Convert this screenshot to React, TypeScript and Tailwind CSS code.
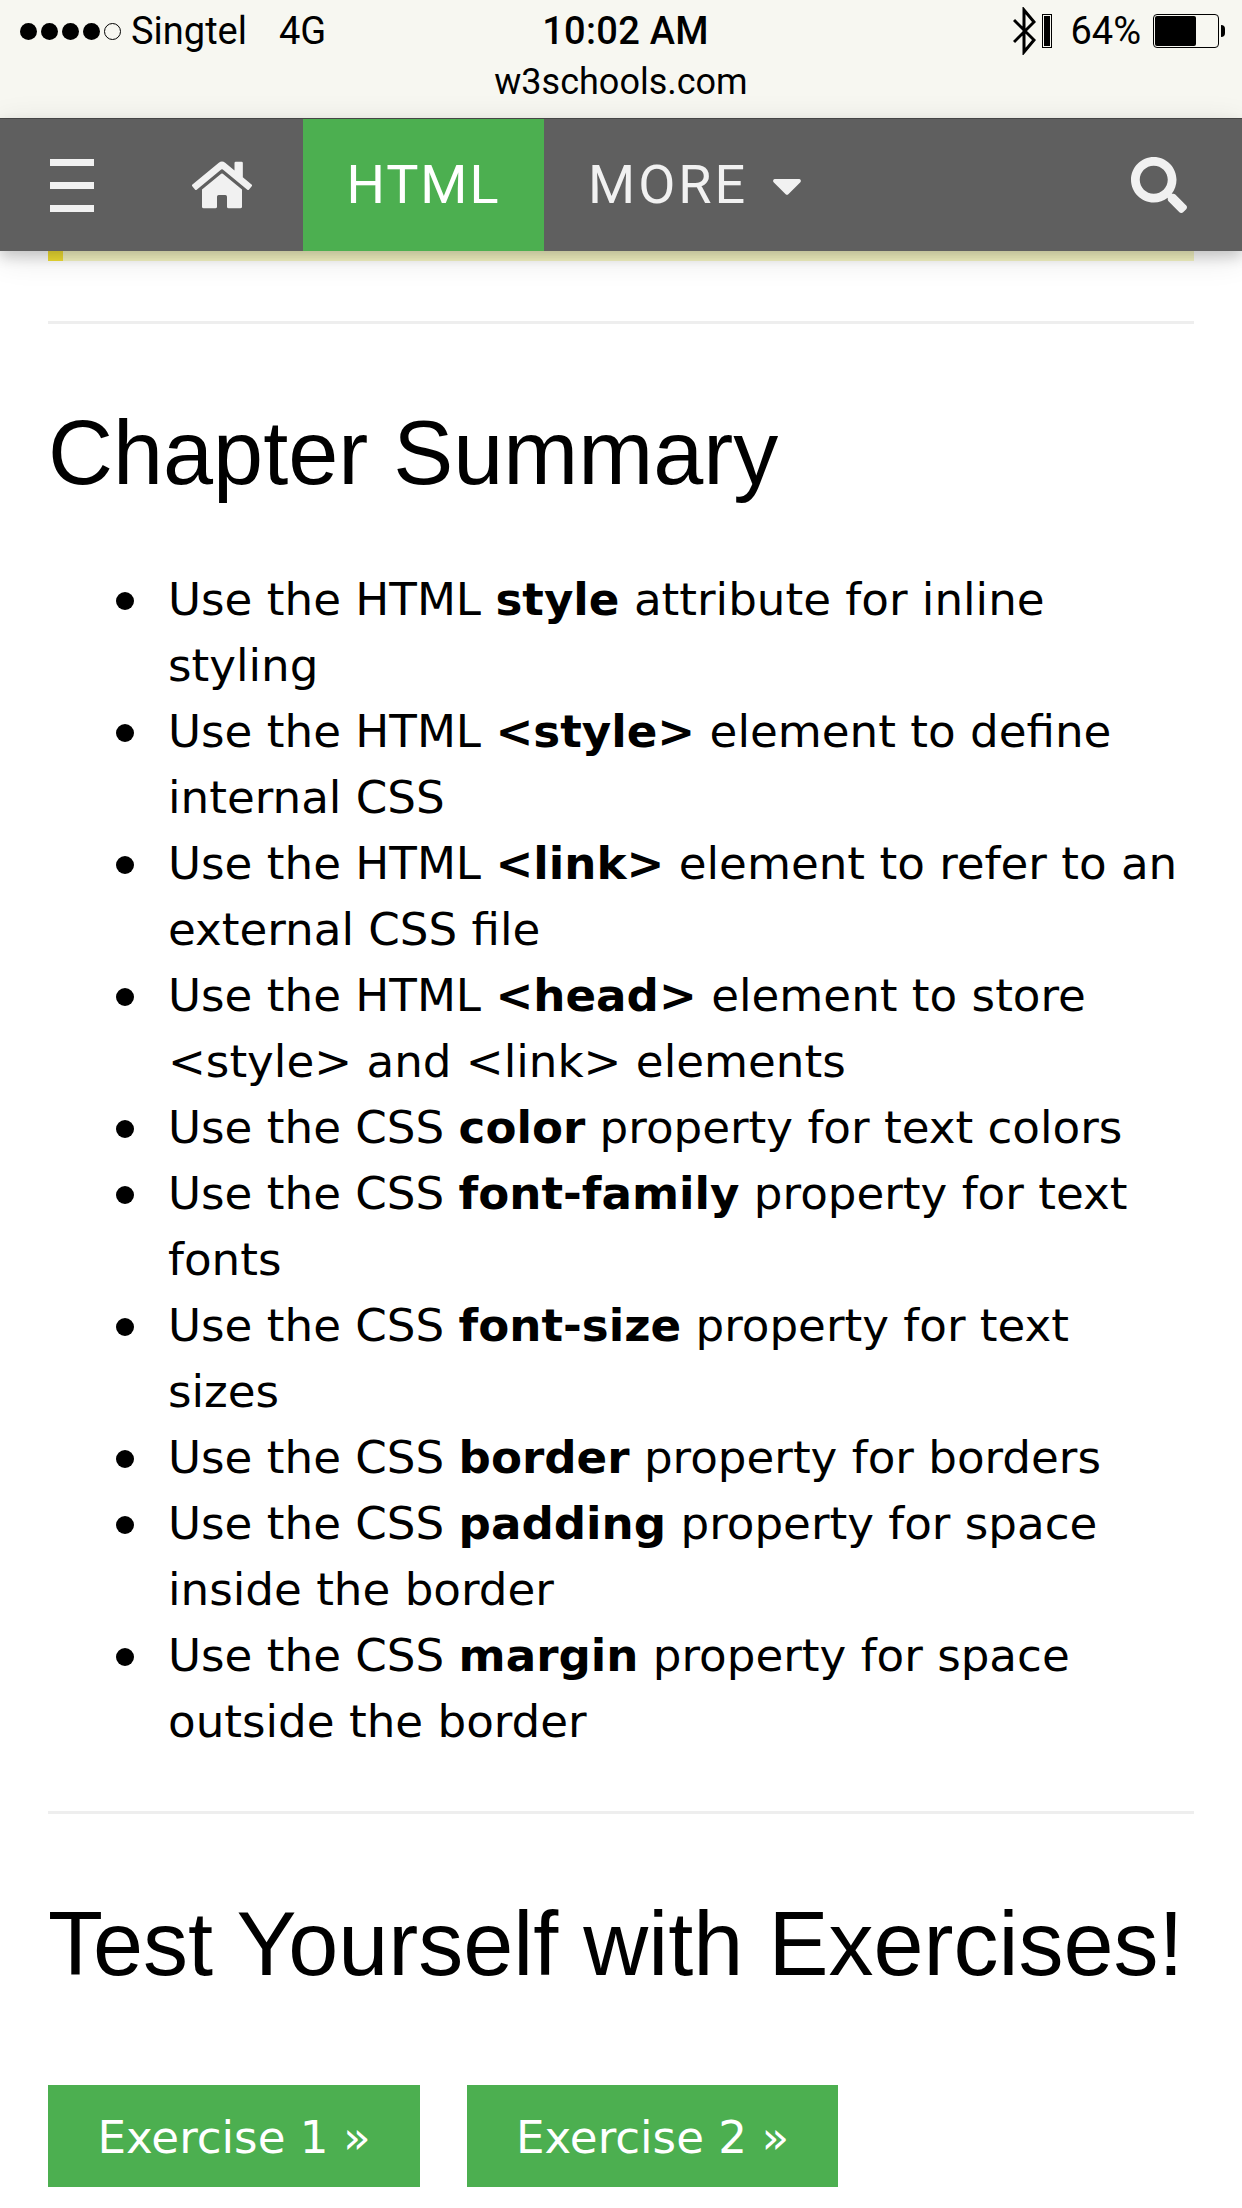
import React from 'react';
import { FaHome, FaSearch, FaCaretDown } from 'react-icons/fa';

const items: { pre: string; bold: string; rest: string }[] = [
  { pre: 'Use the HTML ', bold: 'style', rest: ' attribute for inline styling' },
  { pre: 'Use the HTML ', bold: '<style>', rest: ' element to define internal CSS' },
  { pre: 'Use the HTML ', bold: '<link>', rest: ' element to refer to an external CSS file' },
  { pre: 'Use the HTML ', bold: '<head>', rest: ' element to store <style> and <link> elements' },
  { pre: 'Use the CSS ', bold: 'color', rest: ' property for text colors' },
  { pre: 'Use the CSS ', bold: 'font-family', rest: ' property for text fonts' },
  { pre: 'Use the CSS ', bold: 'font-size', rest: ' property for text sizes' },
  { pre: 'Use the CSS ', bold: 'border', rest: ' property for borders' },
  { pre: 'Use the CSS ', bold: 'padding', rest: ' property for space inside the border' },
  { pre: 'Use the CSS ', bold: 'margin', rest: ' property for space outside the border' },
];

const StatusBar = () => (
  <div className="h-[119px] bg-[#f7f7f1] border-b border-[#4a4a4a] text-black font-['Roboto','Liberation_Sans',sans-serif]">
    <div className="flex items-center justify-between h-[62px] pl-[20px] pr-[17px]">
      <div className="flex items-center w-[400px] text-[38px]">
        <div className="flex gap-[4px] mr-[10px]">
          <span className="w-[17px] h-[17px] rounded-full bg-black" />
          <span className="w-[17px] h-[17px] rounded-full bg-black" />
          <span className="w-[17px] h-[17px] rounded-full bg-black" />
          <span className="w-[17px] h-[17px] rounded-full bg-black" />
          <span className="w-[17px] h-[17px] rounded-full border border-black" />
        </div>
        <span>Singtel</span>
        <span className="ml-[32px]">4G</span>
      </div>
      <div className="text-[38px] font-medium tracking-[0.3px] ml-[6px]">10:02 AM</div>
      <div className="flex items-center justify-end w-[400px] text-[38px]">
        <svg width="23" height="48" viewBox="0 0 23 48" className="mr-[6px]" fill="none" stroke="black" strokeWidth="3">
          <path d="M1 13 L21 33 L11 45 V3 L21 15 L1 35" />
        </svg>
        <div className="w-[10px] h-[34px] border border-black mr-[18px] p-[1px]">
          <div className="h-full bg-black" />
        </div>
        <span>64%</span>
        <div className="ml-[12px] w-[66px] h-[34px] border border-black rounded-[4px] p-[1px]">
          <div className="w-[41px] h-full bg-black rounded-[2px]" />
        </div>
        <div className="ml-[2px] w-[4px] h-[12px] bg-black rounded-r-full" />
      </div>
    </div>
    <div className="text-center text-[36px] leading-[40px]">w3schools.com</div>
  </div>
);

const NavBar = () => (
  <div className="relative z-10 h-[132px] bg-[#5f5f5f] text-[#f1f1f1] flex items-stretch font-['Roboto','Liberation_Sans',sans-serif] shadow-[0_6px_12px_rgba(0,0,0,0.16),0_6px_30px_rgba(0,0,0,0.12)]">
    <div className="w-[303px] flex items-center">
      <div className="ml-[50px] w-[44px] flex flex-col gap-[16px]">
        <span className="h-[7px] bg-[#f1f1f1]" />
        <span className="h-[7px] bg-[#f1f1f1]" />
        <span className="h-[7px] bg-[#f1f1f1]" />
      </div>
      <FaHome className="ml-[98px] text-[60px]" />
    </div>
    <div className="w-[241px] bg-[#4caf50] text-white flex items-center justify-center text-[54px] tracking-[2px] pb-[1px]">HTML</div>
    <div className="flex items-center pl-[44px] text-[54px] tracking-[3px] pb-[1px]">
      MORE
      <FaCaretDown className="ml-[15px] text-[48px]" />
    </div>
    <div className="flex-1 flex items-center justify-end pr-[55px]">
      <FaSearch className="text-[56px]" />
    </div>
  </div>
);

export default function App() {
  return (
    <div className="w-[1242px] h-[2208px] bg-white overflow-hidden font-['DejaVu_Sans',sans-serif] text-black">
      <StatusBar />
      <NavBar />
      <div className="px-[48px]">
        <div className="h-[10px] bg-[#f6f6c4] border-l-[15px] border-[#f2e034]" />
        <hr className="mt-[60px] border-0 h-[3px] bg-[#eeeeee]" />
        <h2 className="mt-[75px] text-[90px] leading-[108px] font-['Liberation_Sans',sans-serif]">Chapter Summary</h2>
        <ul className="mt-[60px] text-[45.2px] leading-[66px]">
          {items.map((item, i) => (
            <li key={i} className="flex items-start">
              <span className="shrink-0 ml-[68px] mt-[25px] mr-[34px] w-[18px] h-[18px] rounded-full bg-black" />
              <span>{item.pre}<b>{item.bold}</b>{item.rest}</span>
            </li>
          ))}
        </ul>
        <hr className="mt-[56px] border-0 h-[3px] bg-[#eeeeee]" />
        <h2 className="mt-[76px] text-[90px] leading-[108px] font-['Liberation_Sans',sans-serif] whitespace-nowrap">Test Yourself with Exercises!</h2>
        <div className="mt-[87px] flex gap-[47px]">
          <div className="w-[372px] h-[102px] pt-[3px] bg-[#4caf50] text-white text-[45.2px] flex items-center justify-center">Exercise 1 »</div>
          <div className="w-[371px] h-[102px] pt-[3px] bg-[#4caf50] text-white text-[45.2px] flex items-center justify-center">Exercise 2 »</div>
        </div>
      </div>
    </div>
  );
}
